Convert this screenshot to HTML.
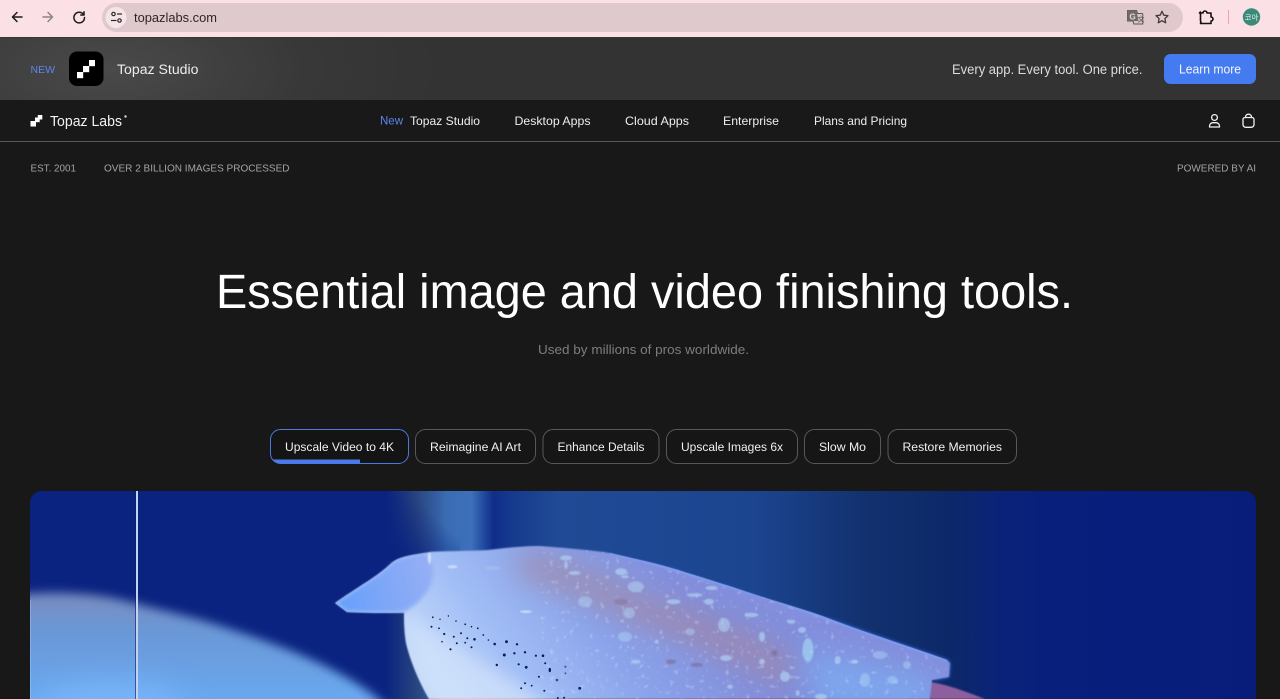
<!DOCTYPE html>
<html>
<head>
<meta charset="utf-8">
<title>Topaz Labs</title>
<style>
html,body{margin:0;padding:0;width:1280px;height:699px;overflow:hidden;background:#181818}
svg{display:block}
text{font-family:"Liberation Sans",sans-serif}
</style>
</head>
<body>
<svg width="1280" height="699" viewBox="0 0 1280 699" xmlns="http://www.w3.org/2000/svg">
<defs>
  <radialGradient id="banner" gradientUnits="userSpaceOnUse" cx="110" cy="68" r="330" gradientTransform="translate(0 40) scale(1 .42)">
    <stop offset="0" stop-color="#4a4a4a"/><stop offset=".6" stop-color="#383838"/><stop offset="1" stop-color="#333"/>
  </radialGradient>
  <clipPath id="vid"><path d="M42 491H1244a12 12 0 0 1 12 12V699H30V503a12 12 0 0 1 12-12z"/></clipPath>
  <clipPath id="pill"><rect x="270.500" y="429.500" width="138" height="34" rx="10"/></clipPath>
  <clipPath id="fish"><path id="fishp" d="M335 603C345 596 353 591 362 585 375 577 384 570 391.500 563 396 559 402 557 412 555L431.500 551.700C450 551 470 551 488 550 505 548 522 546 539 546 565 548 590 550 610 553 635 559 655 563 678 570 700 577 720 583 741 590 770 600 800 608 825 617 860 631 905 645 947 660L950 663 949 677 932 680 930 699 429 699C418 680 410 660 406 643 404 630 404 620 404 612.700 385 613 365 613 347 612z"/></clipPath>
  <filter id="b14" x="-50%" y="-50%" width="200%" height="200%"><feGaussianBlur stdDeviation="14"/></filter>
  <filter id="b8" x="-50%" y="-50%" width="200%" height="200%"><feGaussianBlur stdDeviation="8"/></filter>
  <filter id="b5" x="-50%" y="-50%" width="200%" height="200%"><feGaussianBlur stdDeviation="5"/></filter>
  <filter id="b2" x="-30%" y="-30%" width="160%" height="160%"><feGaussianBlur stdDeviation="2"/></filter>
  <filter id="b1" x="-20%" y="-20%" width="140%" height="140%"><feGaussianBlur stdDeviation=".7"/></filter>
  <filter id="speck" x="0" y="0" width="100%" height="100%">
    <feTurbulence type="fractalNoise" baseFrequency=".2" numOctaves="2" seed="7"/>
    <feColorMatrix values="0 0 0 0 .78  0 0 0 0 .9  0 0 0 0 1  0 0 0 9 -5.900"/>
    <feGaussianBlur stdDeviation=".6"/>
  </filter>
  <linearGradient id="bg" gradientUnits="userSpaceOnUse" x1="30" y1="0" x2="1256" y2="0">
    <stop offset="0" stop-color="#0a2380"/>
    <stop offset=".29" stop-color="#0a2380"/>
    <stop offset=".315" stop-color="#29447f"/>
    <stop offset=".34" stop-color="#3a6cb4"/>
    <stop offset=".36" stop-color="#3c70ba"/>
    <stop offset=".378" stop-color="#0f2d8a"/>
    <stop offset=".395" stop-color="#163b8e"/>
    <stop offset=".43" stop-color="#204a95"/>
    <stop offset=".59" stop-color="#1c4590"/>
    <stop offset=".68" stop-color="#12316f"/>
    <stop offset=".75" stop-color="#0d2868"/>
    <stop offset=".79" stop-color="#0a2378"/>
    <stop offset=".84" stop-color="#081f7c"/>
    <stop offset="1" stop-color="#081d7a"/>
  </linearGradient>
  <linearGradient id="fade" gradientUnits="userSpaceOnUse" x1="385" y1="545" x2="425" y2="505">
    <stop offset="0" stop-color="#0a2380"/><stop offset="1" stop-color="#0a2380" stop-opacity="0"/>
  </linearGradient>
  <linearGradient id="body" gradientUnits="userSpaceOnUse" x1="440" y1="690" x2="640" y2="540">
    <stop offset="0" stop-color="#c4dafa"/><stop offset=".3" stop-color="#a2bef6"/><stop offset=".65" stop-color="#8aa3ea"/><stop offset="1" stop-color="#838fdc"/>
  </linearGradient>
  <linearGradient id="tip" gradientUnits="userSpaceOnUse" x1="335" y1="605" x2="430" y2="580">
    <stop offset="0" stop-color="#659ffb"/><stop offset="1" stop-color="#94aef5"/>
  </linearGradient>
  <linearGradient id="bl" gradientUnits="userSpaceOnUse" x1="0" y1="593" x2="0" y2="699">
    <stop offset="0" stop-color="#7a8bbd"/><stop offset=".35" stop-color="#6a97d6"/><stop offset="1" stop-color="#69a8ef"/>
  </linearGradient>
</defs>

<!-- Browser chrome -->
<rect width="1280" height="38" fill="#fbe1e5"/>
<rect y="37" width="1280" height="1" fill="#3a3536"/>
<g fill="none" stroke="#1f1a1b" stroke-width="1.500" stroke-linecap="round" stroke-linejoin="round">
  <path d="M22 17H12.500M17 12.500L12.500 17 17 21.500"/>
  <path d="M43 17H52.500M48 12.500L52.500 17 48 21.500" stroke="#8d8486"/>
  <path d="M83.500 14.500A5.300 5.300 0 1 0 84.500 17.500M84 11.800V15H80.800"/>
</g>
<rect x="102" y="3" width="1081" height="29" rx="14.500" fill="#e0c9cc"/>
<circle cx="116" cy="17.500" r="10.500" fill="#f6e5e8"/>
<g fill="none" stroke="#2a2526" stroke-width="1.200">
  <circle cx="113.500" cy="14" r="1.700"/><path d="M117 14H122"/>
  <circle cx="119.500" cy="20.500" r="1.700"/><path d="M111 20.500H116.500"/>
</g>
<text x="134" y="22" font-size="12.500" fill="#2b2627" textLength="83" lengthAdjust="spacingAndGlyphs">topazlabs.com</text>
<path d="M1127.500 10.500h9l1 3h4.500a.8.800 0 0 1 .8.800V24h-9l-.8-3h-5.500z" fill="#d9c6c8" stroke="#5b5557" stroke-width="1"/>
<path d="M1127.500 10.500h9l2 10.500h-11z" fill="#706a6c"/>
<text x="1129.500" y="19.500" font-size="8" font-weight="700" fill="#e6d5d7">G</text>
<text x="1137.500" y="21.500" font-size="7" fill="#4e4849" style="font-family:'Noto Sans CJK SC',sans-serif">文</text>
<path d="M1162 11.300l1.800 3.900 4.200.5-3.100 2.900.8 4.200-3.700-2.100-3.700 2.100.8-4.200-3.100-2.900 4.200-.5z" fill="none" stroke="#423c3e" stroke-width="1.300" stroke-linejoin="round"/>
<path d="M1199.500 13h3.500a2 2 0 0 1 4 0h4v4a2 2 0 0 1 0 4v2.500h-10.500a2 2 0 0 1 .5-1.300l-.500-1.200v-9z" fill="none" stroke="#151112" stroke-width="1.600" stroke-linejoin="round"/>
<rect x="1228" y="10" width="1" height="14" fill="#eaa5b3"/>
<circle cx="1251.500" cy="17" r="8.700" fill="#3b8a79"/>
<text x="1251.500" y="20" font-size="7.500" fill="#eef6f3" text-anchor="middle" style="font-family:'Noto Sans CJK KR',sans-serif">코아</text>

<!-- Promo banner -->
<rect y="38" width="1280" height="62" fill="#343434"/>
<rect y="38" width="1280" height="62" fill="url(#banner)"/>
<text x="30.500" y="73" font-size="10" fill="#5b86ea" textLength="24.500" lengthAdjust="spacingAndGlyphs">NEW</text>
<rect x="69" y="51.500" width="34.500" height="34.500" rx="8" fill="#000"/>
<g fill="#fff">
  <rect x="77" y="72" width="6.200" height="6.200"/><rect x="83" y="66" width="6.200" height="6.200"/><rect x="89" y="60" width="6" height="6.200"/>
</g>
<text x="117" y="74" font-size="13.500" fill="#ececec" textLength="81.500" lengthAdjust="spacingAndGlyphs">Topaz Studio</text>
<text x="952" y="74" font-size="13.500" fill="#dcdcdc" textLength="190.500" lengthAdjust="spacingAndGlyphs">Every app. Every tool. One price.</text>
<rect x="1164" y="54" width="92" height="30" rx="6.500" fill="#457bf0"/>
<text x="1179" y="73.500" font-size="12.500" fill="#f4f7ff" textLength="62" lengthAdjust="spacingAndGlyphs">Learn more</text>

<!-- Nav -->
<rect y="100" width="1280" height="41" fill="#191919"/>
<rect y="141" width="1280" height="1" fill="#565656"/>
<g fill="#fff">
  <rect x="30.500" y="121" width="5.500" height="5.500"/><rect x="35" y="117.500" width="4.700" height="4.700"/><rect x="37.800" y="115" width="4.500" height="4.500"/>
</g>
<text x="50" y="126" font-size="14.500" fill="#f2f2f2" textLength="72" lengthAdjust="spacingAndGlyphs">Topaz Labs</text>
<circle cx="125.500" cy="116.500" r="1.200" fill="#d8d8d8"/>
<text x="380" y="124.500" font-size="11.500" fill="#5b86ea" textLength="23" lengthAdjust="spacingAndGlyphs">New</text>
<g font-size="12" fill="#eeeeee">
  <text x="410" y="125" textLength="70" lengthAdjust="spacingAndGlyphs">Topaz Studio</text>
  <text x="514.500" y="125" textLength="76" lengthAdjust="spacingAndGlyphs">Desktop Apps</text>
  <text x="625" y="125" textLength="64" lengthAdjust="spacingAndGlyphs">Cloud Apps</text>
  <text x="723" y="125" textLength="56" lengthAdjust="spacingAndGlyphs">Enterprise</text>
  <text x="814" y="125" textLength="93" lengthAdjust="spacingAndGlyphs">Plans and Pricing</text>
</g>
<g fill="none" stroke="#f2f2f2" stroke-width="1.300" stroke-linecap="round" stroke-linejoin="round">
  <circle cx="1214.500" cy="117.500" r="2.900"/>
  <path d="M1209.500 127v-.8a3.500 3.500 0 0 1 3.500-3.500h3a3.500 3.500 0 0 1 3.500 3.500v.8z"/>
  <path d="M1245 117.500h7a2 2 0 0 1 2 2v5a2.800 2.800 0 0 1-2.800 2.800h-5.400a2.800 2.800 0 0 1-2.800-2.800v-5a2 2 0 0 1 2-2z"/>
  <path d="M1245.500 117.500v-.6a3 2.700 0 0 1 6 0v.6"/>
</g>

<!-- Page -->
<rect y="142" width="1280" height="557" fill="#181818"/>
<g font-size="9.800" fill="#a3a3a3">
  <text x="30.500" y="171.500" textLength="45.500" lengthAdjust="spacingAndGlyphs">EST. 2001</text>
  <text x="104" y="171.500" textLength="185.500" lengthAdjust="spacingAndGlyphs">OVER 2 BILLION IMAGES PROCESSED</text>
  <text x="1177" y="171.500" textLength="79" lengthAdjust="spacingAndGlyphs">POWERED BY AI</text>
</g>
<text x="216" y="308" font-size="48" fill="#ffffff" textLength="857" lengthAdjust="spacingAndGlyphs">Essential image and video finishing tools.</text>
<text x="538" y="354" font-size="13" fill="#7e7e7e" textLength="211" lengthAdjust="spacingAndGlyphs">Used by millions of pros worldwide.</text>

<!-- Pills -->
<rect x="270.500" y="429.500" width="138" height="34" rx="10" fill="#141414" stroke="#4a79e0" stroke-width="1"/>
<rect x="270" y="459.500" width="90" height="5" fill="#4a7be8" clip-path="url(#pill)"/>
<g fill="#161616" stroke="#585858" stroke-width="1">
  <rect x="415.500" y="429.500" width="120" height="34" rx="10"/>
  <rect x="543" y="429.500" width="116" height="34" rx="10"/>
  <rect x="666.500" y="429.500" width="131" height="34" rx="10"/>
  <rect x="804.500" y="429.500" width="76" height="34" rx="10"/>
  <rect x="888" y="429.500" width="128.500" height="34" rx="10"/>
</g>
<g font-size="12.300" fill="#f0f0f0">
  <text x="285" y="451" textLength="109" lengthAdjust="spacingAndGlyphs">Upscale Video to 4K</text>
  <text x="430" y="451" textLength="91" lengthAdjust="spacingAndGlyphs">Reimagine AI Art</text>
  <text x="557.500" y="451" textLength="87" lengthAdjust="spacingAndGlyphs">Enhance Details</text>
  <text x="681" y="451" textLength="102" lengthAdjust="spacingAndGlyphs">Upscale Images 6x</text>
  <text x="819" y="451" textLength="47" lengthAdjust="spacingAndGlyphs">Slow Mo</text>
  <text x="902.500" y="451" textLength="99.500" lengthAdjust="spacingAndGlyphs">Restore Memories</text>
</g>

<!-- Video -->
<g clip-path="url(#vid)">
  <rect x="30" y="491" width="1226" height="208" fill="url(#bg)"/>
  <rect x="370" y="491" width="90" height="70" fill="url(#fade)"/>
  <!-- foreground left blob -->
  <path d="M15 595C60 590 105 594 133 603 170 612 205 620 233 630 270 642 305 655 333 670 352 680 370 690 390 710H15z" fill="url(#bl)" filter="url(#b5)"/>
  <ellipse cx="110" cy="708" rx="75" ry="26" fill="#78b4f8" filter="url(#b14)"/>
  <!-- tail -->
  <path d="M930 682C945 684 962 690 985 699H930z" fill="#8d5f9e" filter="url(#b1)"/>
  <!-- ray glow -->
  <path d="M825 617C860 631 905 645 947 660L950 663 949 677 935 680 900 660z" fill="#3a78f5" filter="url(#b2)" opacity=".8"/>
  <!-- ray body -->
  <use href="#fishp" fill="url(#body)" filter="url(#b1)"/>
  <g clip-path="url(#fish)">
    <path d="M335 603C345 596 353 591 362 585 375 577 384 570 391.500 563 396 559 410 555 425 553 445 575 425 600 404 612.700 385 613 365 613 347 612z" fill="url(#tip)" filter="url(#b2)"/>
    <path d="M404 615C410 650 425 690 440 710H560C510 680 450 645 404 612z" fill="#d2e3fb" filter="url(#b8)" opacity=".7"/>
    <path d="M520 562C560 575 600 590 640 610 690 625 740 645 790 672" fill="none" stroke="#a5869f" stroke-width="28" filter="url(#b14)" opacity=".7"/>
    <path d="M800 650L940 680 935 710 820 710z" fill="#7cb0f5" filter="url(#b14)" opacity=".7"/>
    <rect x="540" y="545" width="420" height="160" filter="url(#speck)" opacity=".28"/>
    <path d="M610 553C655 563 700 577 741 590 800 608 880 638 947 660" fill="none" stroke="#7f9ff6" stroke-width="2.500" filter="url(#b1)"/>
    <!-- spots -->
    <g fill="#b5daf8" filter="url(#b1)" opacity=".62">
      <ellipse cx="429.400" cy="558" rx="1.500" ry="6" fill="#f0faff"/><ellipse cx="452.600" cy="566.700" rx="5" ry="1.500" fill="#e6f3ff"/><ellipse cx="492.600" cy="568" rx="8" ry="1.800" opacity=".5"/>
      <ellipse cx="566" cy="558" rx="6" ry="2.500"/><ellipse cx="566" cy="565" rx="1.800" ry="4"/><ellipse cx="621" cy="571.700" rx="6" ry="3.500"/><ellipse cx="625" cy="576.700" rx="4" ry="1.500"/>
      <ellipse cx="574.600" cy="573" rx="6" ry="2"/><ellipse cx="635.700" cy="586.700" rx="8" ry="5.500" opacity=".8"/><ellipse cx="585" cy="601.700" rx="7" ry="5.500" opacity=".7"/>
      <ellipse cx="526" cy="611.700" rx="6" ry="1.200" fill="#f0f9ff"/><ellipse cx="711.400" cy="588" rx="6" ry="2"/><ellipse cx="694.600" cy="595" rx="8" ry="1.800"/><ellipse cx="709" cy="601.700" rx="5" ry="3"/>
      <ellipse cx="673.500" cy="601.700" rx="7" ry="2.500"/><ellipse cx="629" cy="613" rx="6" ry="5.500" opacity=".7"/><ellipse cx="751.400" cy="615" rx="7" ry="2.200"/><ellipse cx="791.400" cy="621.700" rx="4" ry="2"/>
      <ellipse cx="724" cy="625" rx="6" ry="7" opacity=".85"/><ellipse cx="690" cy="631.700" rx="5" ry="3.500" opacity=".7"/><ellipse cx="802" cy="630" rx="4" ry="3"/><ellipse cx="762" cy="636.700" rx="3" ry="5"/>
      <ellipse cx="808" cy="650" rx="5.500" ry="12" fill="#a8dcf8"/><ellipse cx="837.700" cy="660" rx="3" ry="4"/><ellipse cx="854.500" cy="661.700" rx="4" ry="2"/><ellipse cx="879.800" cy="655" rx="7" ry="4" opacity=".7"/>
      <ellipse cx="907" cy="665" rx="4" ry="4" opacity=".7"/><ellipse cx="865" cy="680" rx="5" ry="7" opacity=".7"/><ellipse cx="892.400" cy="680" rx="5" ry="4" opacity=".7"/><ellipse cx="785" cy="676.700" rx="5" ry="5"/>
      <ellipse cx="635.700" cy="661.700" rx="5" ry="2"/><ellipse cx="726" cy="658" rx="6" ry="3"/><ellipse cx="625" cy="636.700" rx="7" ry="5" opacity=".7"/><ellipse cx="656.700" cy="641.700" rx="2" ry="2"/>
      <ellipse cx="762" cy="661.700" rx="3" ry="3"/><ellipse cx="797.700" cy="693" rx="2" ry="3"/><ellipse cx="730" cy="686.700" rx="3" ry="2"/><ellipse cx="821" cy="696.700" rx="6" ry="3"/>
    </g>
    <g fill="#7a6a90" filter="url(#b1)" opacity=".6">
      <ellipse cx="774.500" cy="653" rx="3" ry="3"/><ellipse cx="696.700" cy="665" rx="6" ry="2"/><ellipse cx="671" cy="661.700" rx="5" ry="2.500"/><ellipse cx="621" cy="601.700" rx="7" ry="3" opacity=".6"/>
    </g>
    <!-- black dots -->
    <g fill="#0b1a58">
      <circle cx="432.800" cy="617.300" r=".9"/><circle cx="440" cy="619.300" r=".7"/><circle cx="448.400" cy="616" r=".7"/><circle cx="456" cy="621" r=".8"/><circle cx="465.200" cy="624.300" r=".9"/>
      <circle cx="471.500" cy="626.700" r=".8"/><circle cx="477.800" cy="628.300" r=".9"/><circle cx="431.500" cy="626.700" r="1"/><circle cx="439" cy="628.300" r=".9"/><circle cx="444.200" cy="634" r="1.100"/>
      <circle cx="453.800" cy="636.700" r="1"/><circle cx="461" cy="633.300" r="1"/><circle cx="467.300" cy="638.300" r="1"/><circle cx="474.500" cy="639.300" r="1.300"/><circle cx="483.300" cy="635" r=".9"/>
      <circle cx="488.400" cy="640" r=".8"/><circle cx="494.700" cy="644" r="1.300"/><circle cx="506.500" cy="641.700" r="1.400"/><circle cx="517" cy="644.300" r="1.200"/><circle cx="442" cy="641.700" r=".8"/>
      <circle cx="456.800" cy="643.300" r="1"/><circle cx="465.200" cy="642.700" r=".9"/><circle cx="471.500" cy="647.300" r="1"/><circle cx="450.500" cy="649.300" r="1.100"/><circle cx="504.300" cy="655" r="1.500"/>
      <circle cx="514.400" cy="653.300" r="1.200"/><circle cx="525" cy="652.300" r="1.200"/><circle cx="535.900" cy="655.700" r="1.100"/><circle cx="543" cy="655.700" r="1.300"/><circle cx="496.800" cy="665" r="1.200"/>
      <circle cx="518.700" cy="664.300" r="1.100"/><circle cx="526.200" cy="667.300" r="1.400"/><circle cx="545.200" cy="663.300" r="1"/><ellipse cx="549.800" cy="670" rx="1.200" ry="2.200"/><circle cx="565.400" cy="666.700" r="1.100" opacity=".6"/>
      <circle cx="538.900" cy="676.700" r="1"/><circle cx="557" cy="680" r="1.300" opacity=".7"/><circle cx="565.400" cy="673.300" r=".9" opacity=".7"/><circle cx="525" cy="683.300" r="1"/><circle cx="531.700" cy="685.700" r=".9"/>
      <circle cx="521.200" cy="688.300" r="1"/><circle cx="579.700" cy="688.300" r="1.400"/><circle cx="544.300" cy="690.700" r="1"/><circle cx="557.800" cy="698" r="1"/><circle cx="564.100" cy="697.700" r="1"/>
    </g>
  </g>
  <!-- Slider line -->
  <rect x="135" y="491" width="1" height="208" fill="#0a1c66" opacity=".6"/>
  <rect x="136" y="491" width="2" height="208" fill="#c3d2ef"/>
  <rect x="30" y="600" width="1" height="99" fill="#b6d6f7" opacity=".35"/>
</g>
</svg>
</body>
</html>
